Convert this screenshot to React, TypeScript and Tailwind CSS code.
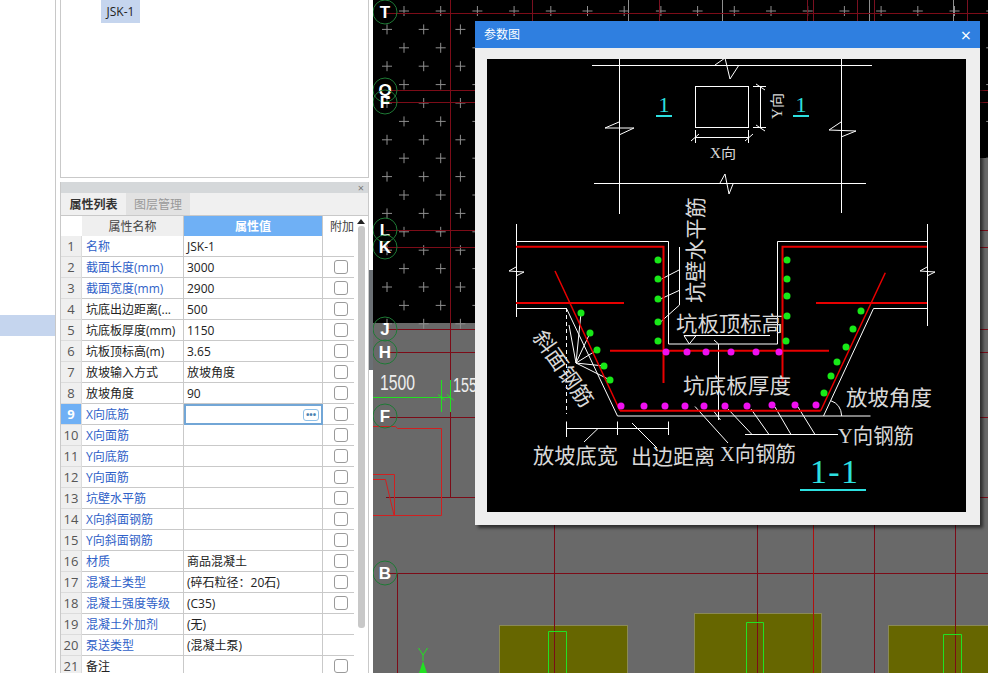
const rows: { name: string; value?: string; blue?: boolean; check?: boolean }[] = [
  { name: '名称', value: 'JSK-1', blue: true, check: false },
  { name: '截面长度(mm)', value: '3000', blue: true },
  { name: '截面宽度(mm)', value: '2900', blue: true },
  { name: '坑底出边距离(...', value: '500' },
  { name: '坑底板厚度(mm)', value: '1150' },
  { name: '坑板顶标高(m)', value: '3.65' },
  { name: '放坡输入方式', value: '放坡角度' },
  { name: '放坡角度', value: '90' },
  { name: 'X向底筋', blue: true },
  { name: 'X向面筋', blue: true },
  { name: 'Y向底筋', blue: true },
  { name: 'Y向面筋', blue: true },
  { name: '坑壁水平筋', blue: true },
  { name: 'X向斜面钢筋', blue: true },
  { name: 'Y向斜面钢筋', blue: true },
  { name: '材质', value: '商品混凝土', blue: true },
  { name: '混凝土类型', value: '(碎石粒径：20石)', blue: true },
  { name: '混凝土强度等级', value: '(C35)', blue: true },
  { name: '混凝土外加剂', value: '(无)', blue: true, check: false },
  { name: '泵送类型', value: '(混凝土泵)', blue: true, check: false },
  { name: '备注' },
]

function PropertyRow({ row, index }: { row: (typeof rows)[number]; index: number }) {
  const active = index === 8
  return (
    <>
      <div className={`h-[21px] pt-[1px] flex items-center justify-center border-b border-r border-[#dcdcdc] text-[13px] ${active ? 'bg-[#6fb0f5] text-white font-bold' : 'bg-[#efefef] text-[#555]'}`}>
        {index + 1}
      </div>
      <div className={`h-[21px] pl-[4px] pt-[2px] flex items-center whitespace-nowrap overflow-hidden border-b border-r border-[#c9c9c9] ${row.blue ? 'text-[#2f5fc8]' : 'text-[#222]'}`}>
        {row.name}
      </div>
      {active ? (
        <div className="h-[21px] flex items-center justify-end pr-[2px] border-2 border-[#72a6d6] bg-white">
          <div className="w-[16px] h-[12px] rounded-[3px] border border-[#8fc0e8] flex items-center justify-center text-[9px] leading-none font-bold text-[#4a7fb0]">
            •••
          </div>
        </div>
      ) : (
        <div className="h-[21px] pl-[3px] pt-[2px] flex items-center whitespace-nowrap border-b border-r border-[#c9c9c9] text-[#222]">
          {row.value}
        </div>
      )}
      <div className="h-[21px] flex items-center pl-[11px] border-b border-[#c9c9c9]">
        {row.check !== false && <div className="w-[14px] h-[14px] rounded-[3px] border border-[#9a9a9a] bg-white" />}
      </div>
    </>
  )
}

const horizontals = [13, 90, 102, 230, 247, 329, 352, 417, 497, 573]
const bubbles: [string, number][] = [['T', 12], ['Q', 90], ['F', 102], ['L', 230], ['K', 247], ['J', 329], ['H', 352], ['F', 416], ['B', 573]]

function Plan() {
  const pluses: [number, number][] = []
  for (let r = 0; r < 18; r++) {
    const y = 11 + r * 18.4
    const x0 = r % 2 === 0 ? 404 : 387
    for (let k = 0; k < 17; k++) pluses.push([x0 + k * 36.7, y])
  }
  return (
    <svg viewBox="373 0 615 673" className="absolute inset-0 w-full h-full">
      <rect x="373" y="0" width="615" height="323" fill="#000" />
      {pluses.map(([x, y], i) => (
        <path key={i} d={`M${x - 5} ${y}H${x + 5}M${x} ${y - 5}V${y + 5}`} stroke="#8f8f8f" strokeWidth="1" />
      ))}
      <rect x="975" y="158" width="13" height="165" fill="#696969" />
      {[628, 722, 869, 953].map(x => <path key={x} d={`M${x}.5 0V21`} stroke="#8f8f8f" />)}
      {[532, 659, 807, 813, 857, 874, 967].map(x => <path key={x} d={`M${x}.5 0V21`} stroke="#7a1020" />)}
      {horizontals.map(y => <path key={y} d={`M386 ${y}.5H988`} stroke="#7c0c18" />)}
      <path d="M450.5 0V497" stroke="#7c0c18" />
      <path d="M397.5 573V673M554.5 497V673M757.5 497V673M874.5 497V673M955.5 497V673" stroke="#7c0c18" />
      <path d="M813.5 497V673" stroke="#b01010" />
      <path d="M373 426.5H395.5L397.5 428.5H441.5V515.5H373M373 474.5H394.5V515.5M373 479.5H385.5L394 515" fill="none" stroke="#d02020" />
      <path d="M373 397.5H451M441.5 380V412M450.5 380V412" stroke="#22e022" fill="none" />
      <path d="M438 394.5L445 400.5M447 394.5L454 400.5" stroke="#22e022" />
      <text x="380" y="390" textLength="35" lengthAdjust="spacingAndGlyphs" fontSize="22" fill="#eee" className="font-['Liberation_Sans',sans-serif]">1500</text>
      <text x="453" y="392" textLength="32" lengthAdjust="spacingAndGlyphs" fontSize="20" fill="#eee" className="font-['Liberation_Sans',sans-serif]">1550</text>
      <rect x="499.5" y="625.5" width="128" height="60" fill="#666600" stroke="#8a8a55" />
      <rect x="694.5" y="613.5" width="127" height="72" fill="#666600" stroke="#8a8a55" />
      <rect x="888.5" y="625.5" width="120" height="60" fill="#666600" stroke="#8a8a55" />
      <path d="M554.5 625V673M757.5 613V673M955.5 625V673" stroke="#7c0c18" />
      <path d="M813.5 613V673" stroke="#b01010" />
      <path d="M548.5 673V631.5H566.5V673M746.5 673V622.5H763.5V673M943.5 673V634.5H961.5V673" fill="none" stroke="#22e022" />
      <path d="M418.5 648L423 655L427.5 648M423 655V661" fill="none" stroke="#22e022" />
      <path d="M423 661L419 673H427Z" fill="#22e022" />
      {bubbles.map(([label, y], i) => (
        <g key={i}>
          <circle cx="385" cy={y} r="12" fill="none" stroke="#1e7a35" />
          <text x="385" y={y + 6} textAnchor="middle" fontSize="17" fill="#fff" className="font-bold font-['Liberation_Sans',sans-serif]">{label}</text>
        </g>
      ))}
    </svg>
  )
}

function CadLabel({ x, y, w, size = 21, children }: { x: number; y: number; w: number; size?: number; children: string }) {
  return (
    <text x={x} y={y} textLength={w} lengthAdjust="spacingAndGlyphs" fontSize={size} fill="#d8d8d8" className="font-['Liberation_Serif','Noto_Sans_CJK_SC',serif]">
      {children}
    </text>
  )
}

function SectionDetail() {
  const greens = [
    [658, 260], [658, 279], [658, 299], [658, 322], [658, 341],
    [787, 260], [787, 279], [787, 296], [787, 316], [786, 341],
    [581, 313], [590, 333], [597, 350], [604, 366], [610, 380],
    [861, 311], [853, 329], [846, 347], [837, 362], [831, 376], [824, 393],
  ]
  const pinks = [
    [666, 352], [687, 352], [706, 352], [731, 352], [756, 352], [779, 352],
    [621, 406], [644, 406], [665, 406], [685, 406], [704, 406], [725, 406], [747, 406], [772, 405], [795, 405], [816, 405],
  ]
  return (
    <svg viewBox="487 59 479 453" className="block w-full h-full">
      <rect x="487" y="59" width="479" height="453" fill="#000" />
      <g fill="none" stroke="#fff" strokeWidth="1">
        <path d="M592 65.5H872M594 183.5H866M619.5 59V214M841.5 59V213" />
        <path d="M715 65L725 58L730 79L739 65M720 183L725 174L729 194L733 184" />
        <path d="M619 122L605 128L634 128L619 135M841 122L829 130L856 131L841 137" />
        <rect x="695.5" y="86.5" width="53" height="41" />
        <path d="M760.5 86V128M753 86.5H766M753 127.5H766M756 84L765 90M756 125L765 131" />
        <path d="M695 137.5H749M695.5 130V143M748.5 130V143M691 141L699 134M745 141L753 134" />
        <path d="M516.5 224V317M516 241.5H668.5V344H777.5V241.5H927M927.5 224V326" />
        <path d="M516 267L509 271L524 272L516 276M927 267L920 271L935 272L927 276" />
        <path d="M516 308.5H566.5L617.5 416H870.5M927 308.5H873.5L823.5 416" />
        <path d="M566.5 308V414" strokeDasharray="4 3" />
        <path d="M679.5 247V305L660.5 322M660.5 299L679 290.5M661.5 279L679 270" />
        <path d="M576 363L581 313M576 363L590 333M576 363L597 350M576 363L604 366M576 363L610 380M576 363L569 325" />
        <path d="M684 335.5H770M684 335.7H696L689.3 344Z" />
        <path d="M718.5 344V420M714 340L718.5 344M714 411.5L720.5 420" />
        <path d="M745 434.5H838M728 409L752 434.5M751 409L769 434.5M775 407L791 434.5M798 407L815 434.5M695 406.5L728 443" />
        <path d="M566 428.5H668.5M566.5 421.5V437M617.5 421.5V435M668.5 421.5V435M598 428.5L584 442M632 423L657 448" />
        <path d="M830.7 400.7Q841 404 841.7 416" />
      </g>
      <g fill="none" stroke="#e80000">
        <path d="M516 246.7H663.5V383M927 246.7H782.5V383" strokeWidth="2" />
        <path d="M516 303H624M816 303H927M610 350.7H829" strokeWidth="2" />
        <path d="M620 410.7H820.7" strokeWidth="2" />
        <path d="M555 271L620 410.7M820.7 410.7L885.3 272.7" strokeWidth="1.5" />
      </g>
      {greens.map(([x, y], i) => <circle key={i} cx={x} cy={y} r="3.5" fill="#18e818" />)}
      {pinks.map(([x, y], i) => <circle key={i} cx={x} cy={y} r="3.5" fill="#f010f0" />)}
      <g fill="#2de0e0">
        <rect x="656" y="115" width="16" height="2" />
        <rect x="793" y="115" width="16" height="2" />
        <rect x="800" y="489" width="66" height="2" />
      </g>
      <g fill="#2de0e0" className="font-['Liberation_Serif',serif]">
        <text x="664" y="112" textAnchor="middle" fontSize="22">1</text>
        <text x="801" y="112" textAnchor="middle" fontSize="22">1</text>
        <text x="810" y="483" textLength="48" lengthAdjust="spacing" fontSize="34">1-1</text>
      </g>
      <CadLabel x={710} y={158} w={26} size={14}>X向</CadLabel>
      <g transform="translate(782 119) rotate(-90)">
        <CadLabel x={0} y={0} w={26} size={14}>Y向</CadLabel>
      </g>
      <g transform="translate(703 303) rotate(-90)">
        <CadLabel x={0} y={0} w={106}>坑壁水平筋</CadLabel>
      </g>
      <CadLabel x={676} y={331} w={107}>坑板顶标高</CadLabel>
      <CadLabel x={683} y={393} w={108}>坑底板厚度</CadLabel>
      <CadLabel x={846} y={405} w={86}>放坡角度</CadLabel>
      <CadLabel x={838} y={443} w={76}>Y向钢筋</CadLabel>
      <CadLabel x={533} y={463} w={85}>放坡底宽</CadLabel>
      <CadLabel x={631} y={464} w={84}>出边距离</CadLabel>
      <CadLabel x={720} y={461} w={76}>X向钢筋</CadLabel>
      <g transform="translate(532 337) rotate(55)">
        <CadLabel x={0} y={0} w={88}>斜面钢筋</CadLabel>
      </g>
    </svg>
  )
}

export default function App() {
  return (
    <div className="w-[988px] h-[673px] overflow-hidden flex bg-white text-[12px] font-['Open_Sans','Noto_Sans_CJK_SC',sans-serif]">
      <div className="w-[56px] shrink-0 border-r border-[#c8c8c8] pt-[315px]">
        <div className="h-[21px] bg-[#c5d5ee]" />
      </div>
      <div className="w-[309px] ml-[4px] shrink-0 flex flex-col">
        <div className="h-[178px] shrink-0 border border-t-0 border-[#c9c9c9] pl-[40px]">
          <div className="w-[39px] h-[23px] pt-[1px] bg-[#c5d5ee] flex items-center justify-center text-[#222]">JSK-1</div>
        </div>
        <div className="mt-[4px] flex-1 min-h-0 border-x border-[#c9c9c9] flex flex-col">
          <div className="h-[11px] shrink-0 bg-[#d5d8da] flex items-center justify-end pr-[4px] text-[11px] leading-none text-[#777]">×</div>
          <div className="h-[23px] shrink-0 bg-[#f0f0f0] flex border-b border-[#c9c9c9]">
            <div className="w-[65px] pt-[1px] flex items-center justify-center font-bold text-[#333]">属性列表</div>
            <div className="w-[64px] pt-[1px] flex items-center justify-center bg-[#e2e2e2] text-[#999]">图层管理</div>
          </div>
          <div className="flex min-h-0">
            <div className="w-[293px] grid grid-cols-[21px_102px_139px_31px] content-start">
              <div className="h-[20px]" />
              <div className="h-[20px] pt-[1px] bg-[#efefef] flex items-center justify-center text-[#444] border-r border-[#c9c9c9]">属性名称</div>
              <div className="h-[20px] pt-[1px] bg-[#6fb0f5] flex items-center justify-center text-white font-bold border-r border-[#c9c9c9]">属性值</div>
              <div className="h-[20px] pt-[1px] flex items-center pl-[7px] text-[#444]">附加</div>
              {rows.map((row, i) => <PropertyRow key={i} row={row} index={i} />)}
            </div>
            <div className="w-[14px] flex flex-col items-center">
              <div className="mt-[3px] w-0 h-0 border-x-[4px] border-x-transparent border-b-[5px] border-b-[#222]" />
              <div className="mt-[2px] w-[7px] h-[402px] rounded-[3px] bg-[#c8c8c8]" />
            </div>
          </div>
        </div>
      </div>
      <div className="w-[4px] shrink-0 pt-[270px]">
        <div className="h-[100px] bg-[#6b7075]" />
      </div>
      <div className="relative flex-1 overflow-hidden bg-[#696969]">
        <Plan />
        <div className="absolute left-[102px] top-[21px] w-[505px] h-[504px] bg-[#eeeeee] flex flex-col shadow-[3px_3px_3px_rgba(0,0,0,0.55)]">
          <div className="h-[27px] shrink-0 bg-[#2f7fe0] flex items-center justify-between pl-[9px] pr-[9px] text-white">
            <span>参数图</span>
            <span className="text-[18px] leading-none">×</span>
          </div>
          <div className="flex-1 min-h-0 pt-[11px] pl-[12px] pr-[14px] pb-[13px]">
            <SectionDetail />
          </div>
        </div>
      </div>
    </div>
  )
}
